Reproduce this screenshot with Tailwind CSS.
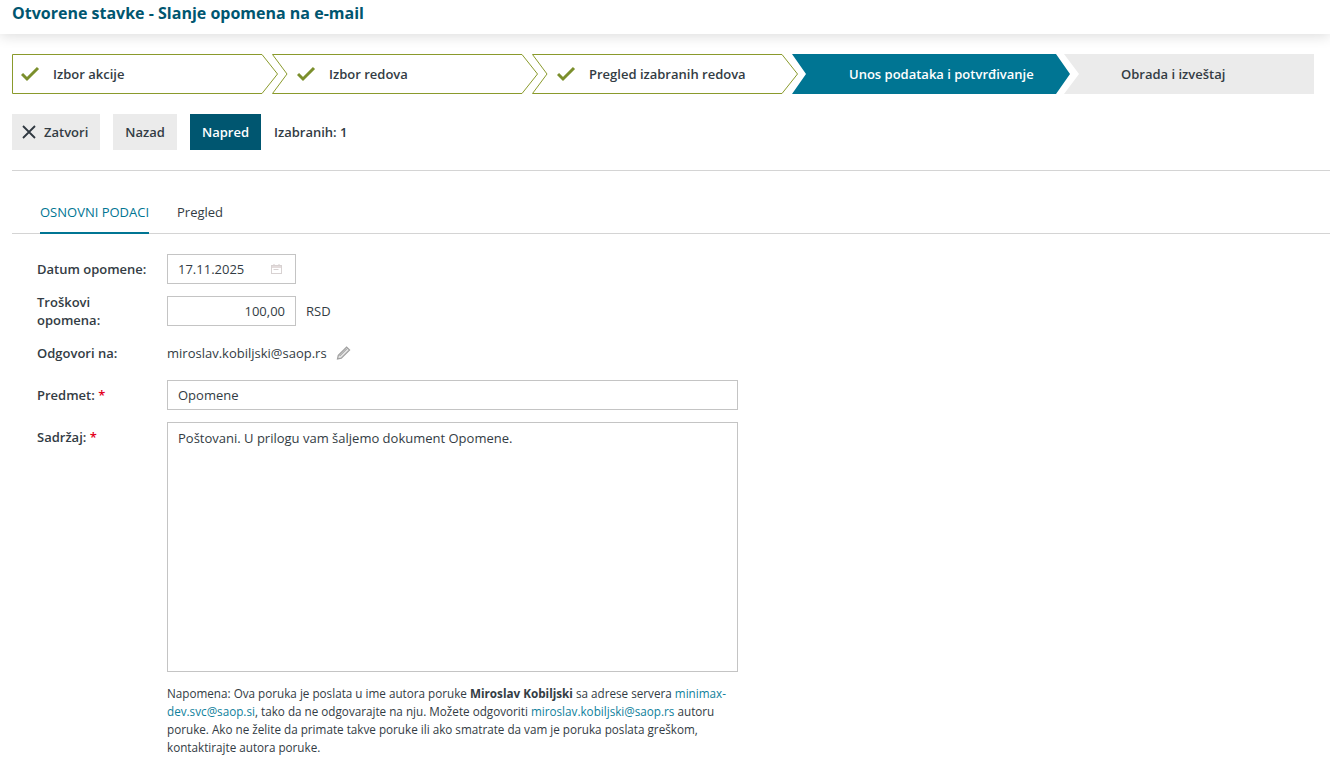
<!DOCTYPE html>
<html lang="sr"><head><meta charset="utf-8"><title>Otvorene stavke</title>
<script src="https://cdn.jsdelivr.net/npm/@tailwindcss/browser@4"></script></head>
<body class="bg-white font-['Open_Sans',sans-serif] text-[13px] text-[#333c44] overflow-hidden">
<div class="w-[1330px] h-[779px] overflow-hidden">
<header class="h-[34px] pl-3 pt-[2px] bg-white shadow-[0_2px_14px_rgba(0,0,0,0.14)]">
  <h1 class="text-[16px] leading-[22px] font-bold text-[#005670]">Otvorene stavke - Slanje opomena na e-mail</h1>
</header>

<nav class="flex mt-5 ml-3 h-10 font-semibold">
  <div class="relative w-[266px] h-10 flex items-center">
    <svg class="absolute inset-0" width="266" height="40"><polygon points="0.5,0.5 250,0.5 265.5,20 250,39.5 0.5,39.5" fill="#fff" stroke="#8a9a2c"/></svg>
    <svg class="relative ml-[9px] mr-3" width="20" height="20" viewBox="0 0 20 20"><path d="M1 10 L6 15 L17 4" fill="none" stroke="#7b8f2c" stroke-width="3"/></svg>
    <span class="relative pt-[2px]">Izbor akcije</span>
  </div>
  <div class="relative w-[266px] h-10 -ml-[6px] flex items-center">
    <svg class="absolute inset-0" width="266" height="40"><polygon points="0.5,0.5 250,0.5 265.5,20 250,39.5 0.5,39.5 15,20" fill="#fff" stroke="#8a9a2c"/></svg>
    <svg class="relative ml-[25px] mr-3" width="20" height="20" viewBox="0 0 20 20"><path d="M1 10 L6 15 L17 4" fill="none" stroke="#7b8f2c" stroke-width="3"/></svg>
    <span class="relative pt-[2px]">Izbor redova</span>
  </div>
  <div class="relative w-[266px] h-10 -ml-[6px] flex items-center">
    <svg class="absolute inset-0" width="266" height="40"><polygon points="0.5,0.5 250,0.5 265.5,20 250,39.5 0.5,39.5 15,20" fill="#fff" stroke="#8a9a2c"/></svg>
    <svg class="relative ml-[25px] mr-3" width="20" height="20" viewBox="0 0 20 20"><path d="M1 10 L6 15 L17 4" fill="none" stroke="#7b8f2c" stroke-width="3"/></svg>
    <span class="relative pt-[2px]">Pregled izabranih redova</span>
  </div>
  <div class="relative w-[278px] h-10 -ml-[6px] flex items-center">
    <svg class="absolute inset-0" width="278" height="40"><polygon points="0,0 264,0 278,20 264,40 0,40 14,20" fill="#007593"/></svg>
    <span class="relative ml-[57px] pt-[2px] text-white">Unos podataka i potvrđivanje</span>
  </div>
  <div class="relative w-[250px] h-10 -ml-[6px] flex items-center">
    <svg class="absolute inset-0" width="250" height="40"><polygon points="0,0 250,0 250,40 0,40 15,20" fill="#ebebeb"/></svg>
    <span class="relative ml-[57px] pt-[2px]">Obrada i izveštaj</span>
  </div>
</nav>

<div class="flex items-center mt-5 ml-3 h-9 font-semibold">
  <div class="h-9 w-[88px] bg-[#ebebeb] flex items-center pl-[10px]">
    <svg class="mr-2" width="14" height="14" viewBox="0 0 14 14"><path d="M1 1 L13 13 M13 1 L1 13" stroke="#2f3840" stroke-width="1.8" fill="none"/></svg>
    <span class="pt-[2px]">Zatvori</span>
  </div>
  <div class="h-9 w-16 ml-[13px] pt-[2px] bg-[#ebebeb] flex items-center justify-center">Nazad</div>
  <div class="h-9 w-[71px] ml-[13px] pt-[2px] bg-[#005670] text-white flex items-center justify-center">Napred</div>
  <div class="ml-[13px] pt-[2px]">Izabranih: 1</div>
</div>

<div class="mt-5 ml-3 border-t border-[#d4d4d4]"></div>

<div class="ml-3 mt-[21px] h-[42px] border-b border-[#d4d4d4] flex">
  <div class="ml-7 w-[109px] h-[42px] pt-[10px] border-b-2 border-[#007593] text-[#007593] leading-[20px] uppercase whitespace-nowrap">Osnovni podaci</div>
  <div class="ml-7 pt-[10px] leading-[20px]">Pregled</div>
</div>

<form class="ml-[37px] mt-5 w-[701px]">
  <div class="flex items-center h-[30px]">
    <div class="w-[130px] pt-[2px] font-semibold">Datum opomene:</div>
    <div class="w-[129px] h-[30px] border border-[#c4c4c4] pl-[10px] pr-[13px] pt-[2px] flex items-center justify-between">
      <span>17.11.2025</span>
      <svg class="-mt-[3px]" width="11" height="10" viewBox="0 0 11 10"><path d="M3 0v1.5M8 0v1.5" stroke="#d8cccc"/><rect x=".5" y="1.5" width="10" height="8" fill="none" stroke="#d8d2d2"/><rect x="1" y="2" width="9" height="2" fill="#e4dcdc"/><rect x="2.5" y="5" width="5" height="1" fill="#d8d2d2"/></svg>
    </div>
  </div>
  <div class="flex items-center h-[30px] mt-3">
    <div class="w-[130px] font-semibold leading-[18px]">Troškovi<br>opomena:</div>
    <div class="w-[129px] h-[30px] border border-[#c4c4c4] pr-[10px] pt-[2px] flex items-center justify-end">100,00</div>
    <span class="ml-[10px] pt-[2px]">RSD</span>
  </div>
  <div class="flex items-center h-5 mt-[17px] pt-[2px]">
    <div class="w-[130px] font-semibold">Odgovori na:</div>
    <span>miroslav.kobiljski@saop.rs</span>
    <svg class="ml-[9px] -mt-[2px]" width="15" height="14" viewBox="0 0 15 14"><path d="M1.5 13 L2.3 9.3 L10.6 1 L13.6 4 L5.3 12.2 Z" fill="#e4e4e4" stroke="#a0a0a0" stroke-width="1.2"/><path d="M3.6 10 L11 2.6" stroke="#8f8f8f"/></svg>
  </div>
  <div class="flex items-center h-[30px] mt-[17px]">
    <div class="w-[130px] pt-[2px] font-semibold">Predmet: <span class="text-[#e3001b]">*</span></div>
    <div class="w-[571px] h-[30px] border border-[#c4c4c4] px-[10px] pt-[2px] flex items-center">Opomene</div>
  </div>
  <div class="flex mt-3">
    <div class="w-[130px] font-semibold pt-[6px]">Sadržaj: <span class="text-[#e3001b]">*</span></div>
    <div class="w-[571px] h-[250px] border border-[#c4c4c4] px-[10px] pt-[6px]">Poštovani. U prilogu vam šaljemo dokument Opomene.</div>
  </div>
  <p class="ml-[130px] mt-3 w-[571px] text-[11.7px] leading-[18px]">Napomena: Ova poruka je poslata u ime autora poruke <b class="font-bold">Miroslav Kobiljski</b> sa adrese servera <span class="text-[#0f7f9c]">minimax-dev.svc@saop.si</span>, tako da ne odgovarajte na nju. Možete odgovoriti <span class="text-[#0f7f9c]">miroslav.kobiljski@saop.rs</span> autoru poruke. Ako ne želite da primate takve poruke ili ako smatrate da vam je poruka poslata greškom, kontaktirajte autora poruke.</p>
</form>
</div>
</body></html>
